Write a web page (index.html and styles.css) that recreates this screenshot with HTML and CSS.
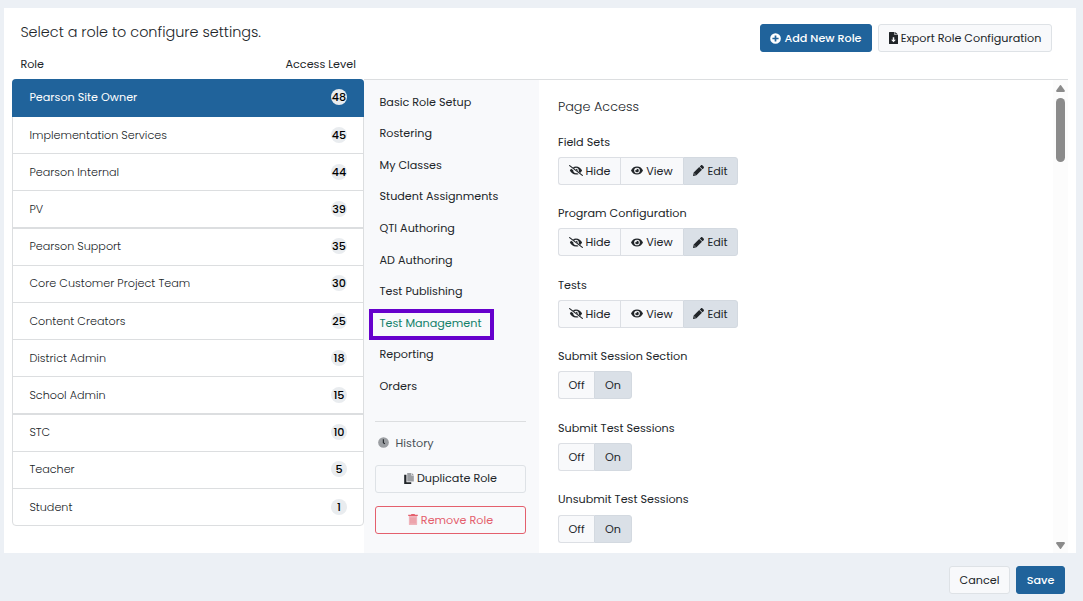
FILE: index.html
```
<!DOCTYPE html>
<html>
<head lang="en">
    <meta charset="UTF-8">
    <title>Role Settings</title>
    <link rel="stylesheet" href="styles.css">
</head>
<body>
<svg class="defs">
    <symbol id="hide" viewBox="0 0 640 512">
        <path d="M320 70c130 0 240 82 285 186-20 44-53 83-92 113l-72-56c8-17 12-37 12-57a128 128 0 0 0-210-98l-66-52c44-22 90-36 143-36zM35 256c14-31 35-60 61-85l96 75v10a124 124 0 0 0 176 114l70 55c-36 13-75 19-118 19C185 444 80 360 35 256zM320 172a84 84 0 0 1 84 84c0 9-2 18-5 27l-86-68c5-14 8-29 7-43z"/>
        <path d="M24 30L616 482" stroke="currentColor" stroke-width="56" stroke-linecap="round"/>
    </symbol>
    <symbol id="view" viewBox="0 0 576 512">
        <path fill-rule="evenodd" d="M288 64C150 64 45 143 0 256c45 113 150 192 288 192s243-79 288-192C531 143 426 64 288 64zM288 120a136 136 0 1 1 0 272 136 136 0 0 1 0-272zM288 168c-8 0-15 1-22 3a44 44 0 0 1-63 61 88 88 0 1 0 85-64z"/>
    </symbol>
    <symbol id="edit" viewBox="0 0 512 512">
        <path d="M290 94L418 222 160 480 20 508c-10 2-18-6-16-16L32 352zM313 71l53-53c24-24 52-24 76 0l52 52c24 24 24 52 0 76l-53 53z"/>
        <path d="M76 392v44h44" fill="none" stroke="#dae0e7" stroke-width="20"/>
    </symbol>
</svg>

<div class="panel">
    <div class="top">
        <h1>Select a role to configure settings.</h1>
        <div class="actions">
            <button class="btn primary add"><svg viewBox="0 0 512 512"><path fill-rule="evenodd" d="M256 8a248 248 0 1 0 0 496 248 248 0 0 0 0-496zM216 112h80v104h104v80H296v104h-80V296H112v-80h104z"/></svg><span>Add New Role</span></button>
            <button class="btn export"><svg viewBox="0 0 384 512"><path fill-rule="evenodd" d="M24 0h210v130h150v358a24 24 0 0 1-24 24H24a24 24 0 0 1-24-24V24A24 24 0 0 1 24 0zM160 220v110H90l102 108 102-108h-70V220zM264 0l120 104H264z"/></svg><span>Export Role Configuration</span></button>
        </div>
    </div>
    <div class="heads"><span>Role</span><span>Access Level</span></div>

    <div class="main">
        <ul class="roles">
            <li class="select"><span>Pearson Site Owner</span><b>48</b></li>
            <li><span>Implementation Services</span><b>45</b></li>
            <li><span>Pearson Internal</span><b>44</b></li>
            <li class="thick"><span>PV</span><b>39</b></li>
            <li><span>Pearson Support</span><b>35</b></li>
            <li><span>Core Customer Project Team</span><b>30</b></li>
            <li><span>Content Creators</span><b>25</b></li>
            <li><span>District Admin</span><b>18</b></li>
            <li class="thick"><span>School Admin</span><b>15</b></li>
            <li><span>STC</span><b>10</b></li>
            <li><span>Teacher</span><b>5</b></li>
            <li><span>Student</span><b>1</b></li>
        </ul>

        <div class="side">
            <ul class="menu">
                <li>Basic Role Setup</li>
                <li>Rostering</li>
                <li>My Classes</li>
                <li>Student Assignments</li>
                <li>QTI Authoring</li>
                <li>AD Authoring</li>
                <li>Test Publishing</li>
                <li class="select">Test Management</li>
                <li>Reporting</li>
                <li>Orders</li>
            </ul>
            <div class="tools">
                <a class="history"><svg viewBox="0 0 512 512"><circle cx="256" cy="256" r="248" fill="#9b9ea2"/><path d="M250 110v155l70 55" fill="none" stroke="#212529" stroke-width="52"/></svg><span>History</span></a>
                <button class="btn dup"><svg viewBox="0 0 448 512"><path d="M140 0h190v118h118v276H140zM358 0l90 92h-90z" fill="#9b9ea2"/><path d="M0 86h104v340h224v86H0z"/></svg><span>Duplicate Role</span></button>
                <button class="btn remove"><svg viewBox="0 0 448 512"><path d="M32 96h384v376a40 40 0 0 1-40 40H72a40 40 0 0 1-40-40z" opacity=".45"/><path d="M0 32h130l20-32h148l20 32h130v64H0z"/><path d="M130 170v270M224 170v270M318 170v270" stroke="currentColor" stroke-width="28" opacity=".6"/></svg><span>Remove Role</span></button>
            </div>
        </div>

        <div class="content">
            <h2>Page Access</h2>
            <div class="field">
                <label>Field Sets</label>
                <div class="group"><span class="w1"><svg class="wide"><use href="#hide"/></svg>Hide</span><span class="w2"><svg><use href="#view"/></svg>View</span><span class="w3 on"><svg class="pen"><use href="#edit"/></svg>Edit</span></div>
            </div>
            <div class="field">
                <label>Program Configuration</label>
                <div class="group"><span class="w1"><svg class="wide"><use href="#hide"/></svg>Hide</span><span class="w2"><svg><use href="#view"/></svg>View</span><span class="w3 on"><svg class="pen"><use href="#edit"/></svg>Edit</span></div>
            </div>
            <div class="field">
                <label>Tests</label>
                <div class="group"><span class="w1"><svg class="wide"><use href="#hide"/></svg>Hide</span><span class="w2"><svg><use href="#view"/></svg>View</span><span class="w3 on"><svg class="pen"><use href="#edit"/></svg>Edit</span></div>
            </div>
            <div class="field">
                <label>Submit Session Section</label>
                <div class="group"><span class="w4">Off</span><span class="w5 on">On</span></div>
            </div>
            <div class="field">
                <label>Submit Test Sessions</label>
                <div class="group"><span class="w4">Off</span><span class="w5 on">On</span></div>
            </div>
            <div class="field">
                <label>Unsubmit Test Sessions</label>
                <div class="group"><span class="w4">Off</span><span class="w5 on">On</span></div>
            </div>
        </div>

        <div class="scroll">
            <svg viewBox="0 0 9 7"><path d="M4 .3Q4.5-.2 5 .3L8.8 5.6Q9 7 8 7H1Q0 7 .2 5.6z"/></svg>
            <div class="thumb"></div>
            <svg class="down" viewBox="0 0 9 7"><path d="M4 6.7Q4.5 7.2 5 6.7L8.8 1.4Q9 0 8 0H1Q0 0 .2 1.4z"/></svg>
        </div>
    </div>
</div>

<div class="foot">
    <button class="btn cancel">Cancel</button>
    <button class="btn primary save">Save</button>
</div>
</body>
</html>
```
FILE: styles.css
```
*{
    padding: 0;
    margin: 0;
    box-sizing: border-box;
}
body{
    width: 1083px;
    height: 601px;
    overflow: hidden;
    background: #ecf0f5;
    color: #212529;
    font: 11.2px/18px Poppins, Inter, sans-serif;
}
ul{
    list-style: none;
}
svg{
    fill: currentColor;
    flex: none;
}
.defs{
    display: none;
}
.panel{
    width: 1072px;
    height: 545px;
    margin: 8px 0 0 4px;
    background: #fff;
}
.top{
    display: flex;
    justify-content: space-between;
    height: 47px;
    padding: 16px 24px 0 16.4px;
}
h1{
    font-size: 14.4px;
    line-height: 17px;
    font-weight: 300;
}
.actions{
    display: flex;
    gap: 6px;
}
.btn{
    display: flex;
    align-items: center;
    justify-content: center;
    height: 28px;
    border: 1px solid #dee2e6;
    border-radius: 3px;
    background: #f8f9fb;
    color: #212529;
    font: inherit;
}
.primary{
    background: #20639b;
    border-color: #20639b;
    color: #fff;
    font-weight: 500;
}
.add{
    width: 112px;
    gap: 3px;
}
.add svg{
    width: 11px;
    height: 11px;
}
.export{
    width: 174px;
    gap: 3px;
}
.export svg{
    width: 9px;
    height: 12px;
}
.heads{
    display: flex;
    justify-content: space-between;
    width: 352px;
    height: 24px;
    padding-left: 16.4px;
}
.main{
    display: flex;
    height: 474px;
    padding-left: 8px;
}
.roles{
    width: 352px;
    height: 447px;
    border: 1px solid #dcdee0;
    border-radius: 4px;
    font-weight: 300;
}
.roles li{
    display: flex;
    align-items: center;
    justify-content: space-between;
    height: 37.2px;
    padding: 0 16px .8px 16.4px;
    border-bottom: 1px solid #dcdee0;
}
.roles .thick{
    padding-bottom: 0;
    border-bottom-width: 2px;
}
.roles li:last-child{
    padding-bottom: 0;
    border: 0;
}
.roles .select{
    height: 38px;
    margin: -1px -1px 0;
    padding: 0 17px 1px 17.4px;
    border-radius: 4px 4px 0 0;
    border-color: #20639b;
    background: #20639b;
    color: #fff;
    font-weight: 400;
}
.roles b{
    width: 16px;
    height: 16px;
    border-radius: 8px;
    background: #e9ecef;
    color: #000;
    font-weight: 500;
    font-size: 11.2px;
    line-height: 16px;
    display: flex;
    justify-content: center;
}
.side{
    width: 175px;
    padding: 6.7px 13px 0 11px;
    border-top: 1px solid #dcdee0;
    background: #f8f9fb;
}
.menu li{
    height: 31.6px;
    padding-left: 4.5px;
    line-height: 31.5px;
}
.menu .select{
    width: 125px;
    height: 31px;
    margin: .9px 0 -.3px -6px;
    padding-left: 6.5px;
    border: 4px solid #60c;
    line-height: 21px;
    color: #12806a;
}
.tools{
    margin-top: 18.2px;
    border-top: 1px solid #dcdee0;
}
.history{
    display: flex;
    align-items: center;
    gap: 6.6px;
    height: 43px;
    padding: 0 0 1px 3px;
    color: #495057;
}
.history svg{
    width: 11px;
    height: 11px;
}
.dup, .remove{
    width: 151px;
    gap: 3px;
}
.dup{
    padding-bottom: 1.6px;
}
.dup svg, .remove svg{
    width: 10px;
    height: 11px;
}
.remove{
    margin-top: 13px;
    border-color: #e4606d;
    color: #e4606d;
}
.content{
    width: 514px;
    padding: 18px 0 0 19px;
    border-top: 1px solid #dcdee0;
}
h2{
    height: 34.7px;
    font-size: 12.8px;
    font-weight: 300;
}
.field{
    height: 71.55px;
}
.field label{
    display: block;
    height: 24.1px;
}
.group{
    display: flex;
    height: 28px;
}
.group span{
    display: flex;
    align-items: center;
    justify-content: center;
    gap: 3px;
    border: 1px solid #dcdfe4;
    border-right: 0;
    background: #f8f9fb;
}
.group span:first-child{
    border-radius: 3px 0 0 3px;
}
.group span:last-child{
    border-right: 1px solid #d3d9e0;
    border-radius: 0 3px 3px 0;
}
.group .on{
    background: #dae0e7;
    border-color: #d3d9e0;
}
.group svg{
    width: 12px;
    height: 11px;
}
.group .wide{
    width: 14px;
}
.group .pen{
    width: 11px;
}
.w1{
    width: 62px;
}
.w2{
    width: 63px;
}
.w3{
    width: 55px;
}
.w4{
    width: 36px;
}
.w5{
    width: 38px;
}
.scroll{
    display: flex;
    flex-direction: column;
    align-items: center;
    width: 15px;
    padding: 5px 0 4px;
    border-top: 1px solid #dcdee0;
    background: #fcfcfc;
}
.scroll svg{
    width: 9px;
    height: 7px;
    fill: #8b8b8b;
}
.thumb{
    width: 9px;
    height: 64px;
    margin-top: 6px;
    border-radius: 5px;
    background: #8b8b8b;
}
.scroll .down{
    margin-top: auto;
}
.foot{
    display: flex;
    justify-content: flex-end;
    gap: 6px;
    padding: 13px 18px 0 0;
}
.cancel{
    width: 61px;
}
.save{
    width: 49px;
}
```
